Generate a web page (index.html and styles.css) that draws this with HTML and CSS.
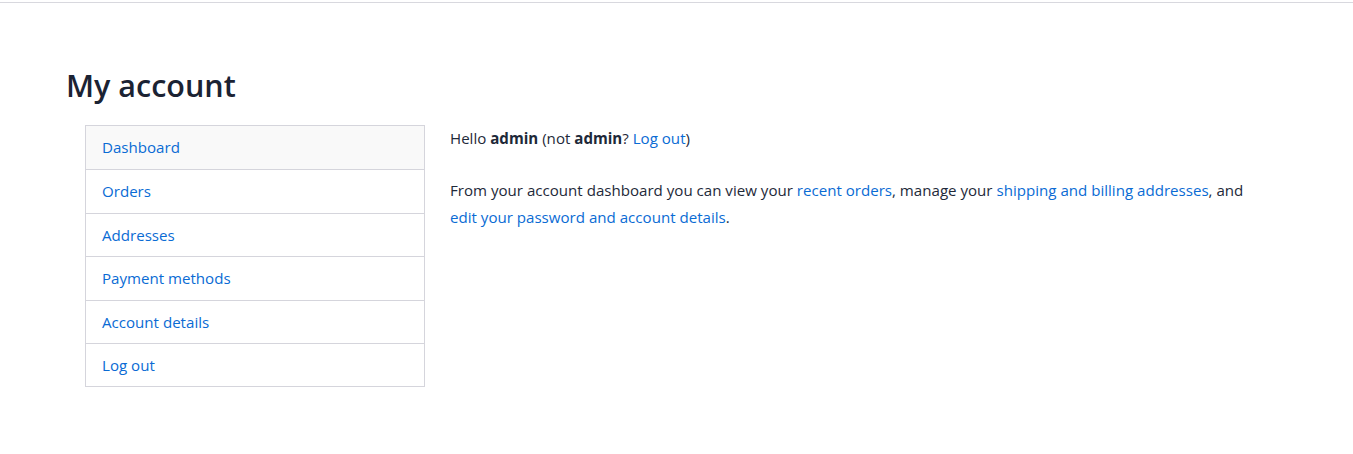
FILE: index.html
```html
<!DOCTYPE html>
<html lang="en">
<head>
<meta charset="utf-8">
<title>My account</title>
<link rel="stylesheet" href="styles.css">
</head>
<body>
<div class="topline"></div>
<main class="page">
  <h1 class="title">My account</h1>
  <div class="account">
    <nav class="account-nav">
      <a class="nav-item active" href="#">Dashboard</a>
      <a class="nav-item" href="#">Orders</a>
      <a class="nav-item" href="#">Addresses</a>
      <a class="nav-item" href="#">Payment methods</a>
      <a class="nav-item" href="#">Account details</a>
      <a class="nav-item" href="#">Log out</a>
    </nav>
    <div class="account-content">
      <p class="hello">Hello <strong>admin</strong> (not <strong>admin</strong>? <a href="#">Log out</a>)</p>
      <p class="intro">From your account dashboard you can view your <a href="#">recent orders</a>, manage your <a href="#">shipping and billing addresses</a>, and <a href="#">edit your password and account details</a>.</p>
    </div>
  </div>
</main>
</body>
</html>
```
FILE: styles.css
```css
* { box-sizing: border-box; }
html, body { margin: 0; padding: 0; background: #fff; }
body {
  font-family: "Open Sans", "Noto Sans", sans-serif;
  color: #1e2939;
  font-size: 15.1px;
}
a { color: #0a6bd4; text-decoration: none; }
.topline { height: 3px; border-bottom: 1px solid #d8d8de; margin-top: 0; }
.page { padding: 0 66px; }
.title {
  margin: 62px 0 20px;
  font-size: 30.5px;
  font-weight: 600;
  line-height: 40px;
  color: #1b2333;
}
.account { display: flex; gap: 25px; padding-left: 19px; }
.account-nav {
  width: 340px;
  flex: none;
  border: 1px solid #d5d5dc;
  display: flex;
  flex-direction: column;
}
.nav-item {
  display: block;
  height: 43.4px;
  line-height: 43px;
  padding: 0 16px;
  border-top: 1px solid #d5d5dc;
}
.nav-item:first-child { border-top: none; background: #f9f9f9; }
.account-content { flex: 1; max-width: 810px; }
.account-content p { margin: 0; line-height: 27px; }
.account-content .intro { margin-top: 25px; }
```
